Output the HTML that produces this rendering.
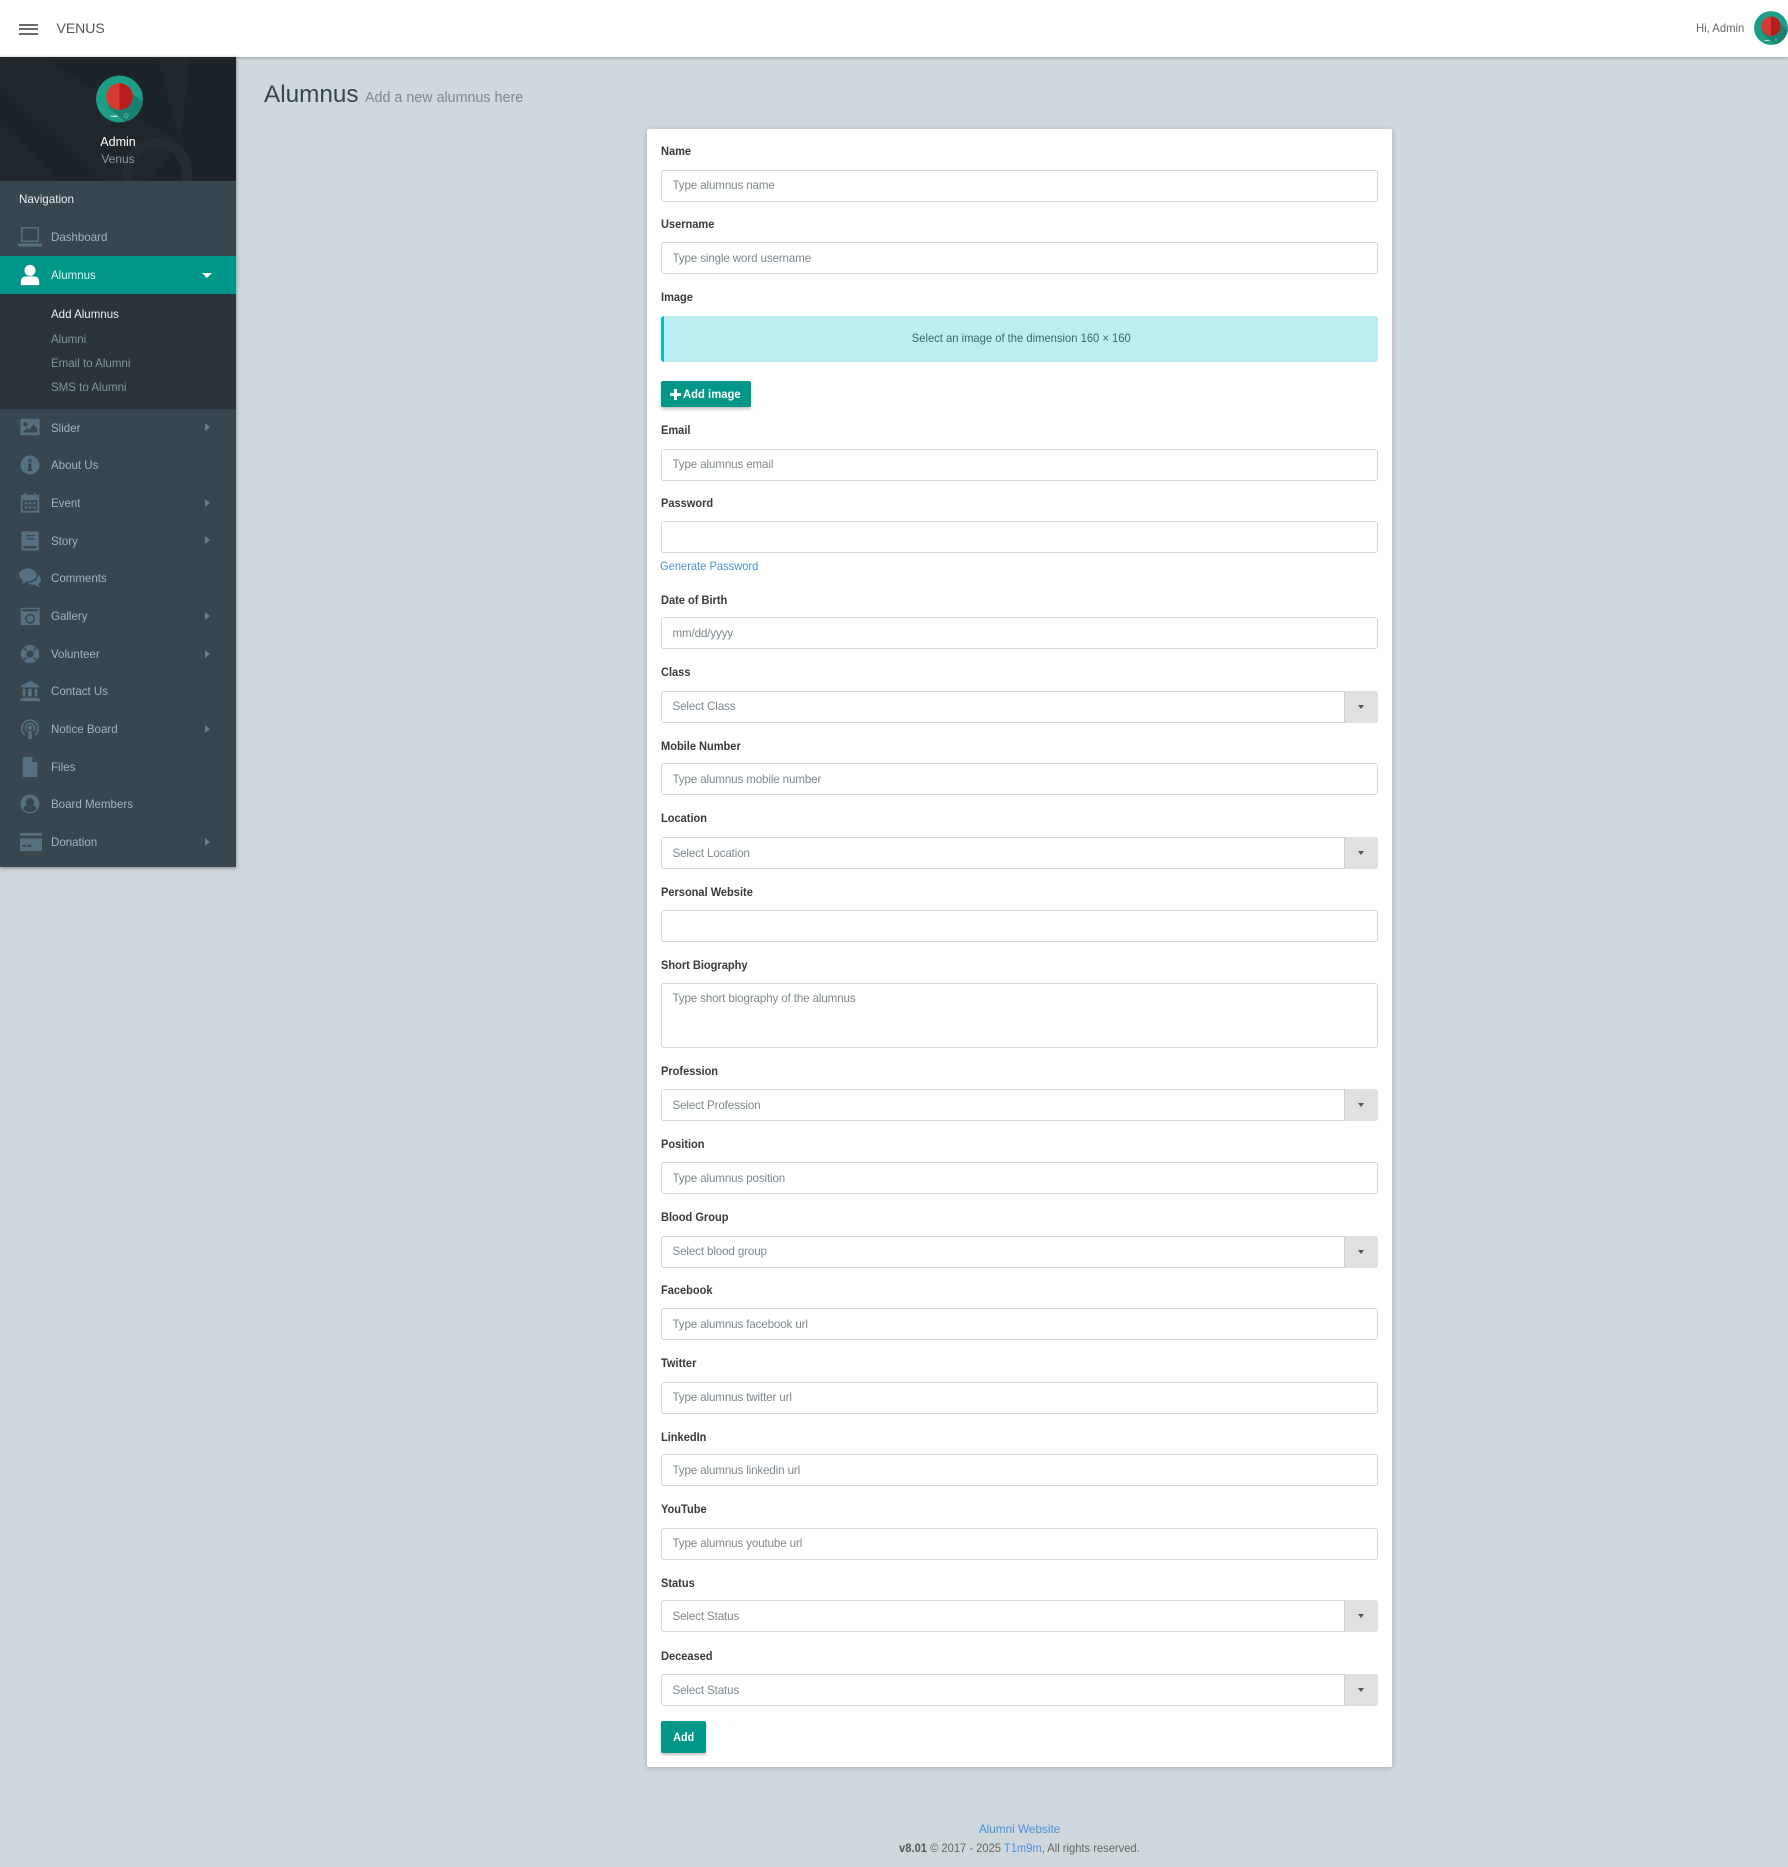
<!DOCTYPE html>
<html lang="en"><head><meta charset="utf-8"><title>Alumnus</title>
<style>
*{box-sizing:border-box}
html,body{margin:0;padding:0}
body{width:1788px;height:1867px;position:relative;overflow:hidden;background:#cfd8dc;font-family:"Liberation Sans",sans-serif;font-size:12px;color:#333}
.a{position:absolute;white-space:nowrap}
.hd{left:0;top:0;width:1788px;height:57px;background:#fff;box-shadow:0 1px 3px rgba(0,0,0,.25)}
.ham{left:19px;width:19px;height:2px;background:#6a6a6a}
.side{left:0;top:57px;width:236px;height:810px;background:#37474f;box-shadow:0 1px 4px rgba(0,0,0,.4)}
.it{left:50.500px;height:16px;line-height:16px;color:#a3b3bb;font-size:12px;transform:scaleX(.96);transform-origin:left center}
.sub{left:50.500px;height:16px;line-height:16px;color:#84949c;font-size:12px;transform:scaleX(.96);transform-origin:left center}
.ic{left:19px;width:22px;height:22px;fill:#55707e}
.ch{left:204.500px;width:0;height:0;border-left:5.500px solid #647f8d;border-top:4.500px solid transparent;border-bottom:4.500px solid transparent}
.card{left:647px;top:129px;width:745px;height:1638px;background:#fff;border-radius:2px;box-shadow:0 1px 6px rgba(0,0,0,.2)}
.l{left:660.500px;height:16px;line-height:16px;font-weight:bold;font-size:12px;color:#3a3a3a;transform:scaleX(.92);transform-origin:left center}
input,textarea{position:absolute;left:661px;width:717px;height:32px;border:1px solid #d8d8d8;border-radius:3px;background:#fff;padding:0 10.500px;font:11.600px "Liberation Sans",sans-serif;letter-spacing:-.13px;color:#757575;outline:0;margin:0;box-shadow:0 0 1px rgba(0,0,0,.06)}
input::placeholder,textarea::placeholder{color:#7d888e;opacity:1}
textarea{height:66px;padding-top:7px;resize:none;line-height:15px}
.add{left:1344px;width:34px;height:32px;background:#e0e0e0;border-radius:0 3px 3px 0;border-left:1px solid #d0d0d0}
.add i{position:absolute;left:12.500px;top:14px;border-top:4.500px solid #555;border-left:3.500px solid transparent;border-right:3.500px solid transparent}
.btn{background:#009688;color:#fff;font-weight:bold;font-size:12px;text-align:center;border-radius:2px;box-shadow:0 2px 3px rgba(0,0,0,.25)}
.lnk{color:#4a90d9}
</style></head><body>
<svg width="0" height="0" style="position:absolute"><defs>
<clipPath id="cc"><circle cx="24" cy="24" r="24"/></clipPath>
<symbol id="av" viewBox="0 0 48 48"><g clip-path="url(#cc)"><circle cx="24" cy="24" r="24" fill="#1f9e87"/><path d="M24 8 L52 30 V52 H36 L12 32Z" fill="#1a8170"/><circle cx="24" cy="21.500" r="13.600" fill="#d53a33"/><path d="M24 7.900a13.600 13.600 0 0 1 0 27.200z" fill="#b71f1c"/><rect x="15" y="41" width="7" height="1.200" fill="#cfe9e3"/><circle cx="31" cy="41" r="1.800" fill="none" stroke="#8fcdbf" stroke-width=".6"/></g></symbol>
</defs></svg>

<div class="a hd"></div>
<div class="a ham" style="top:24px"></div><div class="a ham" style="top:28px"></div><div class="a ham" style="top:33px"></div>
<div class="a" style="left:56.500px;top:19px;line-height:18px;font-size:14px;color:#555">VENUS</div>
<div class="a" style="left:1695.500px;top:20px;line-height:16px;font-size:12px;color:#666;transform:scaleX(.94);transform-origin:left center">Hi, Admin</div>
<svg class="a" style="left:1754px;top:11px" width="34" height="34"><use href="#av"/></svg>

<div class="a side"></div>
<svg class="a" style="left:0;top:57px" width="236" height="124" viewBox="0 0 236 124">
<rect width="236" height="124" fill="#1c242a"/>
<path d="M44 0 L180 86 L150 124 H100 L0 30 V0Z" fill="#1f272d"/>
<path d="M158 0 H190 L180 86Z" fill="#20282e"/>
<path d="M0 60 L60 124 H0Z" fill="#1f272d"/>
<circle cx="157" cy="116" r="30" fill="none" stroke="#242c32" stroke-width="10"/>
</svg>
<svg class="a" style="left:96px;top:75px" width="47" height="48"><use href="#av"/></svg>
<div class="a" style="left:0;width:236px;top:133.500px;line-height:16px;text-align:center;color:#fff;font-size:12.500px">Admin</div>
<div class="a" style="left:0;width:236px;top:151px;line-height:16px;text-align:center;color:#8b969c;font-size:12px">Venus</div>

<div class="a" style="left:19px;top:191px;line-height:16px;color:#eceff1;font-size:12px;transform:scaleX(.97);transform-origin:left center">Navigation</div>

<svg class="a ic" style="top:225px;left:18px;width:24px;height:24px" viewBox="0 0 24 24"><path d="M3 2h18v15H3zM4.500 3.500v12h15v-12zM0 18.500h24v1.500a1.500 1.500 0 0 1-1.500 1.500h-21A1.500 1.500 0 0 1 0 20z" fill-rule="evenodd"/></svg>
<div class="a it" style="top:229px">Dashboard</div>

<div class="a" style="left:0;top:256px;width:236px;height:38px;background:#009688"></div>
<svg class="a ic" style="top:264px;fill:#fff" viewBox="0 0 24 24"><circle cx="12" cy="7" r="6"/><path d="M2 23v-4c0-4 3-5.500 6-5.500h8c3 0 6 1.500 6 5.500v4z"/></svg>
<div class="a it" style="top:267px;color:#e8f5f3">Alumnus</div>
<div class="a" style="left:202px;top:273px;border-top:5px solid #fff;border-left:5px solid transparent;border-right:5px solid transparent"></div>

<div class="a" style="left:0;top:294px;width:236px;height:115px;background:#2a343b"></div>
<div class="a sub" style="top:306px;color:#eef1f2">Add Alumnus</div>
<div class="a sub" style="top:331px">Alumni</div>
<div class="a sub" style="top:355px">Email to Alumni</div>
<div class="a sub" style="top:379px">SMS to Alumni</div>

<svg class="a ic" style="top:416px" viewBox="0 0 24 24"><path fill-rule="evenodd" d="M3 3h18a1.500 1.500 0 0 1 1.500 1.500v15A1.500 1.500 0 0 1 21 21H3a1.500 1.500 0 0 1-1.500-1.500v-15A1.500 1.500 0 0 1 3 3zM7 6.500a2.500 2.500 0 1 0 0 5 2.500 2.500 0 0 0 0-5zM4 18h16v-4l-4-5-5 6-2-2z"/></svg>
<div class="a it" style="top:419.500px">Slider</div><div class="a ch" style="top:423px"></div>

<svg class="a ic" style="top:454px" viewBox="0 0 24 24"><path fill-rule="evenodd" d="M12 2.500a9.500 9.500 0 1 0 0 19 9.500 9.500 0 0 0 0-19zM10.500 6h3v3h-3zM10 10.500h3.500V16h1v2h-5v-2h1v-3.500h-.5z" transform="translate(-1.100 -1.100) scale(1.090)"/></svg>
<div class="a it" style="top:457px">About Us</div>

<svg class="a ic" style="top:492px" viewBox="0 0 24 24"><path fill-rule="evenodd" d="M6 1h2v2h8V1h2v2h4v19.500H2V3h4zM4 9v11.500h16V9zM6 11h3v2.500H6zm4.500 0h3v2.500h-3zm4.500 0h3v2.500h-3zM6 15.500h3V18H6zm4.500 0h3V18h-3zm4.500 0h3V18h-3z"/></svg>
<div class="a it" style="top:495px">Event</div><div class="a ch" style="top:499px"></div>

<svg class="a ic" style="top:530px" viewBox="0 0 24 24"><path fill-rule="evenodd" d="M4 1.500h16a1.500 1.500 0 0 1 1.500 1.500v18a1.500 1.500 0 0 1-1.500 1.500H4A1.500 1.500 0 0 1 2.500 21V3A1.500 1.500 0 0 1 4 1.500zM8 5.500v1.500h9V5.500zm0 3.500v1.500h9V9zM5 17.500v2.500h14v-2.500z"/></svg>
<div class="a it" style="top:532.500px">Story</div><div class="a ch" style="top:536px"></div>

<svg class="a ic" style="top:567px" viewBox="0 0 24 24"><ellipse cx="9.500" cy="8.500" rx="9.500" ry="7"/><path d="M3 19l2.500-6 4 2z"/><path d="M20.500 8.500c2.500 1.300 3.500 3.500 3.500 5.300 0 2-1.300 3.700-3 4.700l2 4-5.500-3c-3.500.3-6.500-.8-8-2.500 6.500.5 12-3 11-8.500z"/></svg>
<div class="a it" style="top:570px">Comments</div>

<svg class="a ic" style="top:605px" viewBox="0 0 24 24"><path fill-rule="evenodd" d="M2 3h20.500v19H2zM3.500 4.500V7h17V4.500zM12.200 9.500a5.500 5.500 0 1 0 0 11 5.500 5.500 0 0 0 0-11zm0 1.700a3.800 3.800 0 1 1 0 7.600 3.800 3.800 0 0 1 0-7.600z"/></svg>
<div class="a it" style="top:608px">Gallery</div><div class="a ch" style="top:612px"></div>

<svg class="a ic" style="top:643px" viewBox="0 0 24 24"><path fill-rule="evenodd" d="M12 2a10 10 0 1 0 0 20 10 10 0 0 0 0-20zm0 6a4 4 0 1 1 0 8 4 4 0 0 1 0-8zM5.500 4.300l3.300 3.300 -1.300 1.300-3.300-3.300zm13 0l1.300 1.300-3.300 3.300-1.300-1.300zM7.500 15.100l1.300 1.300-3.300 3.300-1.300-1.300zm9 0l3.300 3.300-1.300 1.300-3.300-3.300z"/></svg>
<div class="a it" style="top:645.500px">Volunteer</div><div class="a ch" style="top:649.500px"></div>

<svg class="a ic" style="top:680px" viewBox="0 0 24 24"><path fill-rule="evenodd" d="M12 1l9.500 5v2h-19V6zM4 9.500h3V18H4zm6 0h4V18h-4zm7 0h3V18h-3zM2.500 19.500h19V21h1.500v2H1v-2h1.500z"/></svg>
<div class="a it" style="top:683px">Contact Us</div>

<svg class="a ic" style="top:718px" viewBox="0 0 24 24"><g fill="none" stroke="#55707e" stroke-width="1.700"><path d="M6.500 18.500a9 9 0 1 1 11 0"/><path d="M8.500 14.500a5 5 0 1 1 7 0"/></g><circle cx="12" cy="10.500" r="2.500"/><rect x="10" y="14" width="4" height="9" rx="1.500"/></svg>
<div class="a it" style="top:721px">Notice Board</div><div class="a ch" style="top:724.500px"></div>

<svg class="a ic" style="top:756px" viewBox="0 0 24 24"><path d="M4.500 1h10l5.500 5.500V22a1 1 0 0 1-1 1H5a1 1 0 0 1-1-1V2zM14.500 1.500V6.500H20z" fill-rule="evenodd"/></svg>
<div class="a it" style="top:759px">Files</div>

<svg class="a ic" style="top:793px" viewBox="0 0 24 24"><path fill-rule="evenodd" d="M12 2.500a9.500 9.500 0 1 0 0 19 9.500 9.500 0 0 0 0-19zM12 6a4 4 0 0 1 4 4 4 4 0 0 1-1.500 3.200c2 .5 3.700 1.600 4.300 3.200A8 8 0 0 1 12 20a8 8 0 0 1-6.800-3.600c.6-1.600 2.300-2.700 4.300-3.200A4 4 0 0 1 12 6z" transform="translate(-1.100 -1.100) scale(1.090)"/></svg>
<div class="a it" style="top:796px">Board Members</div>

<svg class="a ic" style="top:831px;left:20px" viewBox="0 0 24 24"><path fill-rule="evenodd" d="M0 2h24v3H0zM0 8h24v14H0zM3 15v2.500h3V15zm4.500 0v2.500h5V15z"/></svg>
<div class="a it" style="top:834px">Donation</div><div class="a ch" style="top:838px"></div>

<div class="a" style="left:264px;top:80px;line-height:30px;font-size:24.300px;color:#37474f">Alumnus</div>
<div class="a" style="left:365px;top:88px;line-height:20px;font-size:14.300px;color:#7b8a92">Add a new alumnus here</div>

<div class="a card"></div>

<div class="a l" style="top:143px">Name</div>
<input style="top:169.500px" placeholder="Type alumnus name">
<div class="a l" style="top:216px">Username</div>
<input style="top:242px" placeholder="Type single word username">
<div class="a l" style="top:289px">Image</div>
<div class="a" style="left:661px;top:316px;width:717px;height:46px;background:#bcedf3;border-left:3px solid #00bcd4;border-radius:3px;line-height:44px;text-align:center;color:#37696e;font-size:12px"><span style="display:inline-block;transform:scaleX(.934)">Select an image of the dimension 160 × 160</span></div>
<div class="a btn" style="left:661px;top:381px;width:90px;height:26px"></div>
<div class="a" style="left:670px;top:392.500px;width:11px;height:3px;background:#fff"></div>
<div class="a" style="left:674px;top:388.500px;width:3px;height:11px;background:#fff"></div>
<div class="a" style="left:683px;top:385.500px;line-height:16px;font-weight:bold;color:#fff;transform:scaleX(.94);transform-origin:left center">Add image</div>
<div class="a l" style="top:422px">Email</div>
<input style="top:448.500px" placeholder="Type alumnus email">
<div class="a l" style="top:495px">Password</div>
<input style="top:521px">
<div class="a lnk" style="left:660px;top:558px;line-height:16px;transform:scaleX(.927);transform-origin:left center">Generate Password</div>
<div class="a l" style="top:592px">Date of Birth</div>
<input style="top:617px" placeholder="mm/dd/yyyy">
<div class="a l" style="top:664px">Class</div>
<input style="top:690.500px" placeholder="Select Class"><div class="a add" style="top:690.500px"><i></i></div>
<div class="a l" style="top:738px">Mobile Number</div>
<input style="top:763px" placeholder="Type alumnus mobile number">
<div class="a l" style="top:810px">Location</div>
<input style="top:837px" placeholder="Select Location"><div class="a add" style="top:837px"><i></i></div>
<div class="a l" style="top:883.500px">Personal Website</div>
<input style="top:909.500px">
<div class="a l" style="top:956.500px">Short Biography</div>
<textarea style="top:982.500px;height:65.500px;padding-top:7.500px" placeholder="Type short biography of the alumnus"></textarea>
<div class="a l" style="top:1063px">Profession</div>
<input style="top:1089px" placeholder="Select Profession"><div class="a add" style="top:1089px"><i></i></div>
<div class="a l" style="top:1136px">Position</div>
<input style="top:1162px" placeholder="Type alumnus position">
<div class="a l" style="top:1209px">Blood Group</div>
<input style="top:1235.500px" placeholder="Select blood group"><div class="a add" style="top:1235.500px"><i></i></div>
<div class="a l" style="top:1282px">Facebook</div>
<input style="top:1308px" placeholder="Type alumnus facebook url">
<div class="a l" style="top:1355px">Twitter</div>
<input style="top:1381.500px" placeholder="Type alumnus twitter url">
<div class="a l" style="top:1429px">LinkedIn</div>
<input style="top:1454px" placeholder="Type alumnus linkedin url">
<div class="a l" style="top:1501px">YouTube</div>
<input style="top:1527.500px" placeholder="Type alumnus youtube url">
<div class="a l" style="top:1575px">Status</div>
<input style="top:1600px" placeholder="Select Status"><div class="a add" style="top:1600px"><i></i></div>
<div class="a l" style="top:1648px">Deceased</div>
<input style="top:1674px" placeholder="Select Status"><div class="a add" style="top:1674px"><i></i></div>
<div class="a btn" style="left:661px;top:1721px;width:45px;height:32px;line-height:32px"><span style="display:inline-block;transform:scaleX(.9)">Add</span></div>

<div class="a" style="left:0;top:1809px;width:1788px;height:58px;background:#ced7dc"></div>
<div class="a lnk" style="left:647px;width:745px;top:1821px;line-height:16px;text-align:center"><span style="display:inline-block;transform:scaleX(.98)">Alumni Website</span></div>
<div class="a" style="left:647px;width:745px;top:1840px;line-height:16px;text-align:center;color:#666"><span style="display:inline-block;transform:scaleX(.93)"><b style="color:#555">v8.01</b> © 2017 - 2025 <span class="lnk">T1m9m</span>, All rights reserved.</span></div>
</body></html>
